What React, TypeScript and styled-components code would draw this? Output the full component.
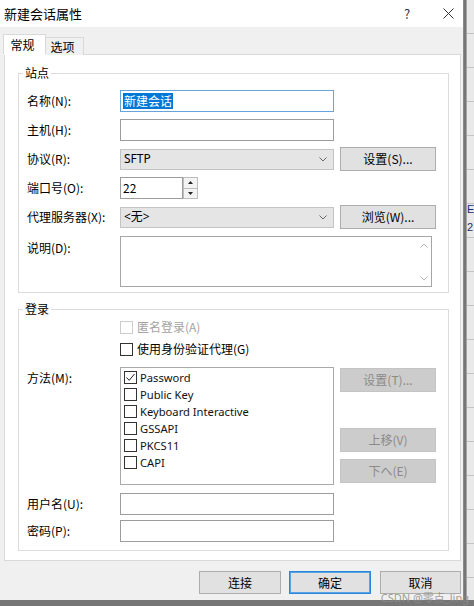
import React from "react";
import styled, { createGlobalStyle } from "styled-components";

const GlobalStyle = createGlobalStyle`
  html, body {
    margin: 0;
    padding: 0;
    background: #767676;
  }
  body {
    font-family: "Noto Sans CJK SC", "Noto Sans", sans-serif;
    font-size: 12px;
    line-height: 16px;
    color: #000;
  }
  * { box-sizing: border-box; }
`;

const Screen = styled.div`
  position: relative;
  display: flex;
  width: 474px;
  height: 606px;
`;

const Dialog = styled.div`
  display: flex;
  flex-direction: column;
  width: 464px;
  height: 600px;
  background: #f0f0f0;
  border-right: 1px solid #8a8a8a;
`;

const SideStrip = styled.div`
  flex: 1;
  height: 600px;
  margin-left: 2px;
  background: repeating-linear-gradient(
    to bottom,
    #e9e9e9 0px,
    #e9e9e9 33px,
    #c4c4c4 33px,
    #c4c4c4 34px
  );
  border-left: 1px solid #a5a5a5;
  padding-top: 200px;
  font-family: "Liberation Sans", sans-serif;
  font-size: 11px;
  line-height: 18px;
  color: #1d2d6b;
  overflow: hidden;
`;

const TitleBar = styled.div`
  display: flex;
  align-items: center;
  height: 27px;
  padding-left: 4px;
  background: #fff;
`;

const Title = styled.div`
  flex: 1;
  font-size: 13px;
`;

const HelpMark = styled.div`
  width: 16px;
  margin-right: 18px;
  text-align: center;
  font-size: 13px;
  color: #333;
`;

const CloseBox = styled.div`
  display: flex;
  align-items: center;
  justify-content: center;
  width: 30px;
  height: 27px;
`;

const Body = styled.div`
  display: flex;
  flex-direction: column;
  flex: 1;
  padding: 7px 2px 0 4px;
`;

const Tabs = styled.div`
  position: relative;
  z-index: 1;
  display: flex;
  align-items: flex-end;
  height: 21px;
  margin: 0 0 -1px -1px;
`;

const Tab = styled.div<{ $active?: boolean }>`
  display: flex;
  align-items: center;
  justify-content: center;
  width: ${(p) => (p.$active ? 43 : 38)}px;
  height: ${(p) => (p.$active ? 21 : 18)}px;
  background: ${(p) => (p.$active ? "#fff" : "#f0f0f0")};
  border: 1px solid #d9d9d9;
  border-left: ${(p) => (p.$active ? "1px solid #d9d9d9" : "none")};
  border-bottom: ${(p) => (p.$active ? "1px solid #fff" : "none")};
  padding-right: 4px;
`;

const Panel = styled.div`
  background: #fff;
  border: 1px solid #d9d9d9;
  padding: 10px 11px 9px 13px;
`;

const Group = styled.fieldset<{ $top?: number; $padTop: number; $padBottom: number }>`
  margin: ${(p) => p.$top ?? 0}px 0 0 0;
  padding: ${(p) => p.$padTop}px 0 ${(p) => p.$padBottom}px 8px;
  border: 1px solid #dcdcdc;
  min-width: 0;
`;

const Legend = styled.legend`
  padding: 0 2px;
  margin-left: -4px;
  line-height: 16px;
  font-size: 12px;
`;

const Row = styled.div<{ $top?: number; $h?: number; $start?: boolean }>`
  display: grid;
  grid-template-columns: 87px 214px 96px;
  column-gap: 6px;
  align-items: ${(p) => (p.$start ? "start" : "center")};
  margin-top: ${(p) => p.$top ?? 0}px;
  height: ${(p) => p.$h ?? 24}px;
`;

const Label = styled.div<{ $pad?: number }>`
  line-height: 16px;
  white-space: nowrap;
  padding-top: ${(p) => p.$pad ?? 0}px;
`;

const Field = styled.div<{ $focused?: boolean; $width?: number }>`
  display: flex;
  align-items: center;
  width: ${(p) => (p.$width ? `${p.$width}px` : "100%")};
  height: 22px;
  padding-left: 2px;
  background: #fff;
  border: 1px solid ${(p) => (p.$focused ? "#68a4dc" : "#9c9c9c")};
`;

const Selection = styled.span`
  background: #0078d7;
  color: #fff;
  line-height: 16px;
  padding: 0 1px;
`;

const Select = styled.div`
  display: flex;
  align-items: center;
  justify-content: space-between;
  height: 21px;
  padding: 0 6px 0 3px;
  background: #e5e5e5;
  border: 1px solid #c4c4c4;
  font-family: "Noto Sans", "Noto Sans CJK SC", sans-serif;
`;

const Button = styled.div<{ $disabled?: boolean; $default?: boolean; $mt?: number; $width?: number }>`
  display: flex;
  align-items: center;
  justify-content: center;
  width: ${(p) => (p.$width ? `${p.$width}px` : "100%")};
  height: ${(p) => (p.$width ? 23 : 24)}px;
  margin-top: ${(p) => p.$mt ?? 0}px;
  background: ${(p) => (p.$disabled ? "#cccccc" : "#e1e1e1")};
  color: ${(p) => (p.$disabled ? "#8a8a8a" : "#000")};
  border: 1px solid ${(p) => (p.$disabled ? "#c4c4c4" : p.$default ? "#2a86dc" : "#adadad")};
  box-shadow: ${(p) => (p.$default ? "inset 0 0 0 1px #5aa2e4" : "none")};
`;

const PortBox = styled.div`
  display: flex;
  width: 78px;
`;

const Spin = styled.div`
  display: flex;
  flex-direction: column;
  width: 15px;
  height: 22px;
`;

const SpinHalf = styled.div`
  display: flex;
  align-items: center;
  justify-content: center;
  flex: 1;
  background: #f3f3f3;
  border: 1px solid #bdbdbd;
  & + & {
    border-top: none;
  }
`;

const TextArea = styled.div`
  grid-column: 2 / span 2;
  display: flex;
  justify-content: flex-end;
  width: 312px;
  height: 51px;
  margin-top: -2px;
  border: 1px solid #a6a6a6;
  background: #fff;
`;

const ScrollBar = styled.div`
  display: flex;
  flex-direction: column;
  justify-content: space-between;
  align-items: center;
  width: 15px;
  padding: 6px 0 5px;
`;

const CheckLine = styled.div<{ $disabled?: boolean }>`
  grid-column: 2 / span 2;
  display: flex;
  align-items: center;
  gap: 4px;
  color: ${(p) => (p.$disabled ? "#a3a3a3" : "#000")};
`;

const Box = styled.span<{ $disabled?: boolean }>`
  display: inline-flex;
  align-items: center;
  justify-content: center;
  width: 13px;
  height: 13px;
  flex-shrink: 0;
  background: #fff;
  border: 1px solid ${(p) => (p.$disabled ? "#cccccc" : "#333")};
`;

const MethodList = styled.div`
  height: 118px;
  padding-top: 1px;
  background: #fff;
  border: 1px solid #a9a9a9;
`;

const MethodItem = styled.div`
  display: flex;
  align-items: center;
  gap: 3px;
  height: 17px;
  padding-left: 3px;
  font-family: "Noto Sans", "Noto Sans CJK SC", sans-serif;
  font-size: 11.2px;
  color: #111;
`;

const ButtonStack = styled.div`
  display: flex;
  flex-direction: column;
`;

const Footer = styled.div`
  display: flex;
  justify-content: flex-end;
  padding-top: 10px;
`;

const FooterGap = styled.div<{ $w: number }>`
  width: ${(p) => p.$w}px;
`;

const Watermark = styled.div`
  position: absolute;
  right: 5px;
  bottom: 2px;
  font-family: "Noto Sans", "Noto Sans CJK SC", sans-serif;
  font-size: 11px;
  line-height: 13px;
  color: rgba(140, 140, 140, 0.85);
`;

const Check = ({ checked, disabled }: { checked?: boolean; disabled?: boolean }) => (
  <Box $disabled={disabled}>
    {checked && (
      <svg width="11" height="11" viewBox="0 0 11 11">
        <polyline points="1.5,5.5 4.2,8.3 9.5,2" fill="none" stroke="#222" strokeWidth="1" />
      </svg>
    )}
  </Box>
);

const Chevron = ({ up, color = "#666" }: { up?: boolean; color?: string }) => (
  <svg width="8" height="5" viewBox="0 0 8 5">
    <polyline points={up ? "0.5,4.5 4,1 7.5,4.5" : "0.5,0.5 4,4 7.5,0.5"} fill="none" stroke={color} strokeWidth="1" />
  </svg>
);

const Triangle = ({ up }: { up?: boolean }) => (
  <svg width="5" height="3" viewBox="0 0 5 3">
    <polygon points={up ? "0,3 2.5,0 5,3" : "0,0 2.5,3 5,0"} fill="#222" />
  </svg>
);

const methods = [
  { name: "Password", checked: true },
  { name: "Public Key" },
  { name: "Keyboard Interactive" },
  { name: "GSSAPI" },
  { name: "PKCS11" },
  { name: "CAPI" },
];

export default function App() {
  return (
    <>
      <GlobalStyle />
      <Screen>
        <Dialog>
          <TitleBar>
            <Title>新建会话属性</Title>
            <HelpMark>?</HelpMark>
            <CloseBox>
              <svg width="11" height="11" viewBox="0 0 11 11">
                <path d="M0.5 0.5 L10.5 10.5 M10.5 0.5 L0.5 10.5" stroke="#333" strokeWidth="1" />
              </svg>
            </CloseBox>
          </TitleBar>
          <Body>
            <Tabs>
              <Tab $active>常规</Tab>
              <Tab>选项</Tab>
            </Tabs>
            <Panel>
              <Group $padTop={8} $padBottom={5}>
                <Legend>站点</Legend>
                <Row>
                  <Label>名称(N):</Label>
                  <Field $focused>
                    <Selection>新建会话</Selection>
                  </Field>
                </Row>
                <Row $top={5}>
                  <Label>主机(H):</Label>
                  <Field />
                </Row>
                <Row $top={5}>
                  <Label>协议(R):</Label>
                  <Select>
                    <span>SFTP</span>
                    <Chevron />
                  </Select>
                  <Button>设置(S)...</Button>
                </Row>
                <Row $top={5}>
                  <Label>端口号(O):</Label>
                  <PortBox>
                    <Field $width={63}>22</Field>
                    <Spin>
                      <SpinHalf>
                        <Triangle up />
                      </SpinHalf>
                      <SpinHalf>
                        <Triangle />
                      </SpinHalf>
                    </Spin>
                  </PortBox>
                </Row>
                <Row $top={5}>
                  <Label>代理服务器(X):</Label>
                  <Select>
                    <span>&lt;无&gt;</span>
                    <Chevron />
                  </Select>
                  <Button>浏览(W)...</Button>
                </Row>
                <Row $top={9} $start $h={49}>
                  <Label $pad={2}>说明(D):</Label>
                  <TextArea>
                    <ScrollBar>
                      <Chevron up color="#b5b5b5" />
                      <Chevron color="#b5b5b5" />
                    </ScrollBar>
                  </TextArea>
                </Row>
              </Group>

              <Group $top={8} $padTop={2} $padBottom={7}>
                <Legend>登录</Legend>
                <Row $h={16}>
                  <span />
                  <CheckLine $disabled>
                    <Check disabled />
                    匿名登录(A)
                  </CheckLine>
                </Row>
                <Row $top={6} $h={16}>
                  <span />
                  <CheckLine>
                    <Check />
                    使用身份验证代理(G)
                  </CheckLine>
                </Row>
                <Row $top={10} $start $h={118}>
                  <Label $pad={3}>方法(M):</Label>
                  <MethodList>
                    {methods.map((m) => (
                      <MethodItem key={m.name}>
                        <Check checked={m.checked} />
                        {m.name}
                      </MethodItem>
                    ))}
                  </MethodList>
                  <ButtonStack>
                    <Button $disabled $mt={1}>设置(T)...</Button>
                    <Button $disabled $mt={36}>上移(V)</Button>
                    <Button $disabled $mt={7}>下へ(E)</Button>
                  </ButtonStack>
                </Row>
                <Row $top={7}>
                  <Label>用户名(U):</Label>
                  <Field />
                </Row>
                <Row $top={3}>
                  <Label>密码(P):</Label>
                  <Field />
                </Row>
              </Group>
            </Panel>
            <Footer>
              <Button $width={82}>连接</Button>
              <FooterGap $w={8} />
              <Button $width={82} $default>确定</Button>
              <FooterGap $w={9} />
              <Button $width={81}>取消</Button>
            </Footer>
          </Body>
        </Dialog>
        <SideStrip>
          <div>E</div>
          <div>2</div>
        </SideStrip>
        <Watermark>CSDN @零点_ling</Watermark>
      </Screen>
    </>
  );
}
